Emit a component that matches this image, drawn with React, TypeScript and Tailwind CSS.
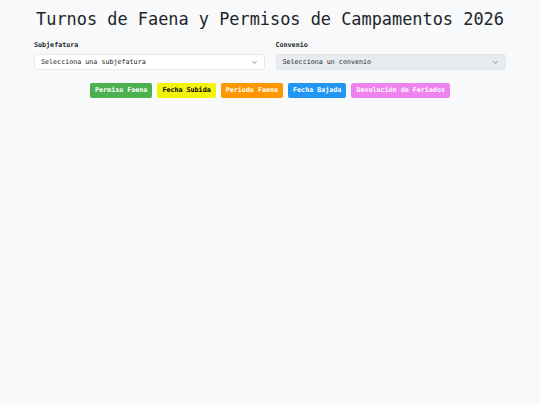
import { ChevronDown } from 'lucide-react';

const leyenda = [
  { label: 'Permiso Faena', cls: 'bg-[#4caf50] text-white' },
  { label: 'Fecha Subida', cls: 'bg-[#f2f20a] text-black' },
  { label: 'Periodo Faena', cls: 'bg-[#ff9800] text-white' },
  { label: 'Fecha Bajada', cls: 'bg-[#2196f3] text-white' },
  { label: 'Devolución de Feriados', cls: 'bg-[#ee82ee] text-white' },
];

function Selector({ label, placeholder, disabled }: { label: string; placeholder: string; disabled?: boolean }) {
  return (
    <div className="flex flex-col">
      <span className="text-[6.7px] font-bold text-[#212529] mb-[4px] leading-[9px]">{label}</span>
      <div
        className={`flex items-center justify-between h-[16px] px-[6px] rounded-[3px] border ${
          disabled ? 'bg-[#e9ecef] border-[#e2e5e8]' : 'bg-white border-[#e6e8eb]'
        }`}
      >
        <span className="text-[6.7px] text-[#212529]">{placeholder}</span>
        <ChevronDown size={7} strokeWidth={2.5} className="text-[#555]" />
      </div>
    </div>
  );
}

export default function App() {
  return (
    <div className="min-h-screen bg-[#f8f9fa] font-['DejaVu_Sans_Mono',monospace]">
      <div className="w-[472px] mx-auto pt-[8px]">
        <h1 className="text-center whitespace-nowrap text-[16.9px] leading-[23px] text-[#212529]">
          Turnos de Faena y Permisos de Campamentos 2026
        </h1>

        <div className="grid grid-cols-2 gap-[11px] mt-[10px]">
          <Selector label="Subjefatura" placeholder="Selecciona una subjefatura" />
          <Selector label="Convenio" placeholder="Selecciona un convenio" disabled />
        </div>

        <div className="flex justify-center gap-[5px] mt-[13px]">
          {leyenda.map((l) => (
            <span
              key={l.label}
              className={`h-[15px] px-[5px] flex items-center rounded-[2px] text-[6.7px] font-bold ${l.cls}`}
            >
              {l.label}
            </span>
          ))}
        </div>
      </div>
    </div>
  );
}
